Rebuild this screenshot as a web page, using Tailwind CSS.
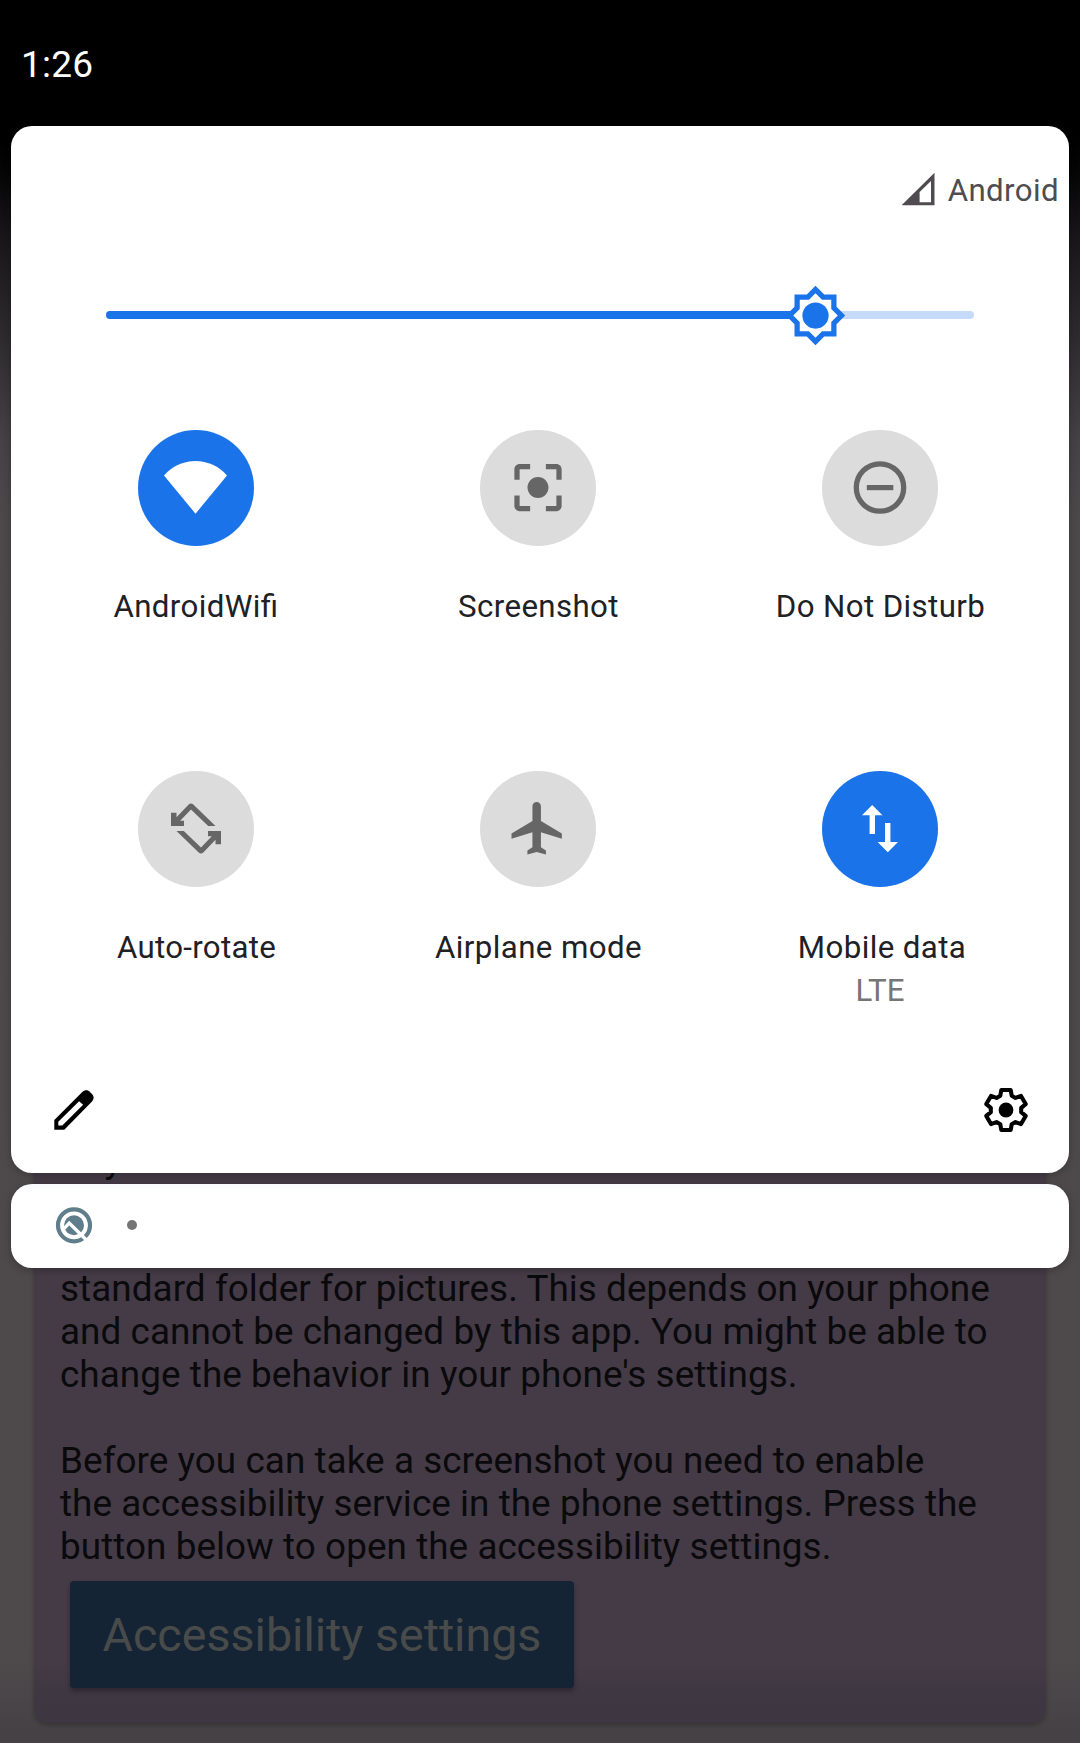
<!DOCTYPE html>
<html lang="en">
<head>
<meta charset="utf-8">
<title>Quick settings</title>
<script src="https://cdn.jsdelivr.net/npm/@tailwindcss/browser@4"></script>
</head>
<body class="bg-black">
<div class="relative w-[1080px] h-[1743px] overflow-hidden font-['Roboto',sans-serif]">

  <!-- Dimmed app behind the shade -->
  <div class="absolute inset-0 flex flex-col justify-end px-[34px] pb-[20px] bg-[linear-gradient(to_bottom,#000_0px,#000_137px,#080708_180px,#19171a_240px,#333033_360px,#454144_440px,#4d494b_520px,#4e4a4c_1660px,#474245_1725px,#464144_1743px)]">
    <div class="h-[620px] flex flex-col justify-end items-start rounded-[14px] px-[26px] pb-[35px] shadow-[0_2px_4px_#00000040] bg-[linear-gradient(to_bottom,#443b47_0px,#443b47_560px,#3f3742_590px,#3e3641_620px)]">
      <p class="whitespace-pre text-[36.9px] leading-[43px] tracking-[0.04px] text-[#0a090b]">Any
<br><br>standard folder for pictures. This depends on your phone
and cannot be changed by this app. You might be able to
change the behavior in your phone's settings.

Before you can take a screenshot you need to enable
the accessibility service in the phone settings. Press the
button below to open the accessibility settings.</p>
      <div class="mt-[13px] ml-[10px] w-[504px] h-[107px] pt-[2px] rounded-[4px] bg-[#152434] flex items-center justify-center text-[46.6px] leading-none text-[#494b4a] shadow-[0_3px_5px_#00000050]">Accessibility settings</div>
    </div>
  </div>

  <div class="relative flex flex-col px-[11px]">
    <div class="h-[126px] pl-[10px] pt-[4px] flex items-center text-white text-[37px] tracking-[0.2px] leading-[44px]"><span>1:26</span></div>

    <!-- Quick settings panel -->
    <div class="h-[1047px] bg-white rounded-[21px] shadow-[0_2px_8px_#00000040] flex flex-col">
      <div class="h-[128px] pr-[10px] flex items-center justify-end text-[31.24px] tracking-[0.4px] text-[#504d50]">
        <svg class="w-[34px] h-[34px] mr-[13px] mb-[2px]" viewBox="0 0 34 34"><path fill="#4f4b4e" fill-rule="evenodd" d="M33.5 .7V33.3H.6zM18.6 20V30.2H30V9z"/></svg>
        <span class="pt-[2px]">Android</span>
      </div>

      <!-- Brightness slider -->
      <div class="mt-[31px] ml-[95px] w-[868px] h-[60px] relative flex items-center">
        <div class="w-full h-[8px] rounded-full bg-[#c6dbfa]"><div class="w-[700px] h-full rounded-l-full bg-[#1a73e8]"></div></div>
        <svg class="absolute left-[678px] top-[-1px] w-[63px] h-[63px]" viewBox="0 0 24 24">
          <path fill="#1a73e8" d="M20 8.69V4h-4.69L12 .69 8.69 4H4v4.69L.69 12 4 15.31V20h4.69L12 23.31 15.31 20H20v-4.69L23.31 12z"/>
          <path fill="#fff" d="M18 9.52V6h-3.52L12 3.52 9.52 6H6v3.52L3.52 12 6 14.48V18h3.52L12 20.48 14.48 18H18v-3.52L20.48 12z"/>
          <circle cx="12" cy="12" r="5" fill="#1a73e8"/>
        </svg>
      </div>

      <!-- Tiles -->
      <div class="mt-[85px] ml-[14px] grid grid-cols-[342px_342px_342px] grid-rows-[341px_308px] text-center text-[31.24px] leading-[43px] tracking-[0.4px] text-[#202124]">
        <div class="flex flex-col items-center">
          <svg class="w-[116px] h-[116px] mb-[39px]" viewBox="0 0 116 116"><circle cx="58" cy="58" r="58" fill="#1a73e8"/><path fill="#fff" d="M57.5 83.7L26 45.5A41.5 41.5 0 0 1 89 45.5z"/></svg>
          <span class="[font-feature-settings:'liga'_1]">AndroidWifi</span>
        </div>
        <div class="flex flex-col items-center">
          <svg class="w-[116px] h-[116px] mb-[39px]" viewBox="0 0 116 116"><circle cx="58" cy="58" r="58" fill="#dcdcdc"/><path fill="#666" transform="translate(26.5 26) scale(2.625)" d="M12 8c-2.21 0-4 1.79-4 4s1.79 4 4 4 4-1.79 4-4-1.79-4-4-4zm-7 7H3v4c0 1.1.9 2 2 2h4v-2H5v-4zM5 5h4V3H5c-1.1 0-2 .9-2 2v4h2V5zm14-2h-4v2h4v4h2V5c0-1.1-.9-2-2-2zm0 16h-4v2h4c1.1 0 2-.9 2-2v-4h-2v4z"/></svg>
          <span class="pl-px">Screenshot</span>
        </div>
        <div class="flex flex-col items-center">
          <svg class="w-[116px] h-[116px] mb-[39px]" viewBox="0 0 116 116"><circle cx="58" cy="58" r="58" fill="#dcdcdc"/><circle cx="58" cy="57.5" r="23.7" fill="none" stroke="#666" stroke-width="5.3"/><path fill="#666" d="M44.8 55h26.5v5.2H44.8z"/></svg>
          <span class="pl-px">Do Not Disturb</span>
        </div>
        <div class="flex flex-col items-center">
          <svg class="w-[116px] h-[116px] mb-[39px]" viewBox="0 0 116 116"><circle cx="58" cy="58" r="58" fill="#dcdcdc"/><g fill="#666"><path d="M33 41.7H38.5V46.2L50.7 33.6Q53 31.4 55.3 33.6L77.5 55H70.2L53 38.6 42.2 49.7H46V55H33Z"/><path transform="rotate(180 58 57.5)" d="M33 41.7H38.5V46.2L50.7 33.6Q53 31.4 55.3 33.6L77.5 55H70.2L53 38.6 42.2 49.7H46V55H33Z"/></g></svg>
          <span class="pl-px tracking-[0.3px]">Auto-rotate</span>
        </div>
        <div class="flex flex-col items-center">
          <svg class="w-[116px] h-[116px] mb-[39px]" viewBox="0 0 116 116"><circle cx="58" cy="58" r="58" fill="#dcdcdc"/><path fill="#666" transform="translate(26.2 25.8) scale(2.65 2.625)" d="M21 16v-2l-7.9-4.8V3.6c0-.9-.7-1.6-1.6-1.6s-1.6.7-1.6 1.6V9.2L2 14v2l7.9-2.5v5.7l-1.9 1.3V22l3.5-1 3.5 1v-1.5l-1.9-1.3v-5.7z"/></svg>
          <span class="pl-px">Airplane mode</span>
        </div>
        <div class="flex flex-col items-center">
          <svg class="w-[116px] h-[116px] mb-[39px]" viewBox="0 0 116 116"><circle cx="58" cy="58" r="58" fill="#1a73e8"/><path fill="#fff" d="M50.2 34L60.5 44.3H53V63H47.6V44.3H40zM63 52h5.4V71H76L65.8 81.2 55.6 71H63z"/></svg>
          <span class="pl-[4px]">Mobile data</span>
          <span class="text-[#757575] tracking-normal">LTE</span>
        </div>
      </div>

      <div class="mt-[7px] pl-[41px] pr-[39px] flex items-center justify-between">
        <svg class="w-[44px] h-[44px]" viewBox="-2 -2 44 44"><path fill="#000" fill-rule="evenodd" d="M.3 30L28.3 2C30.6-.3 33.5-.3 35.5 1.6L38.2 4.3C40.2 6.3 40.2 9.2 38 11.4L10.3 39.7H.3zM4.3 31.8V35.4H8.3L29.1 14.8 25.1 11.2z"/></svg>
        <svg class="w-[48px] h-[48px]" viewBox="-24 -24 48 48"><circle r="7.4"/><path fill="none" stroke="#000" stroke-width="4.1" stroke-linejoin="round" d="M-5.7-14.3L-4.7-20H4.7L5.7-14.3 9.5-12.1 15-14.1 19.7-5.9 15.2-2.2V2.2L19.7 5.9 15 14.1 9.5 12.1 5.7 14.3 4.7 20H-4.7L-5.7 14.3-9.5 12.1-15 14.1-19.7 5.9-15.2 2.2V-2.2L-19.7-5.9-15-14.1-9.5-12.1z"/></svg>
      </div>
    </div>

    <!-- Collapsed notification -->
    <div class="mt-[11px] h-[84px] rounded-[21px] bg-[linear-gradient(to_bottom,#f8f9fb_0px,#fff_10px)] shadow-[0_2px_8px_#00000040] pl-[43px] pb-[2px] flex items-center gap-[33px]">
      <svg class="w-[40px] h-[40px]" viewBox="0 0 40 40"><circle cx="20" cy="20.3" r="16" fill="none" stroke="#607d8b" stroke-width="4.2"/><circle cx="20" cy="20.3" r="10" fill="#607d8b"/><path fill="none" stroke="#fff" stroke-width="3.4" d="M9.5 24.1L15.2 18.1 35 37.5"/></svg>
      <span class="w-[10px] h-[10px] rounded-full bg-[#757575]"></span>
    </div>
  </div>
</div>
</body>
</html>
